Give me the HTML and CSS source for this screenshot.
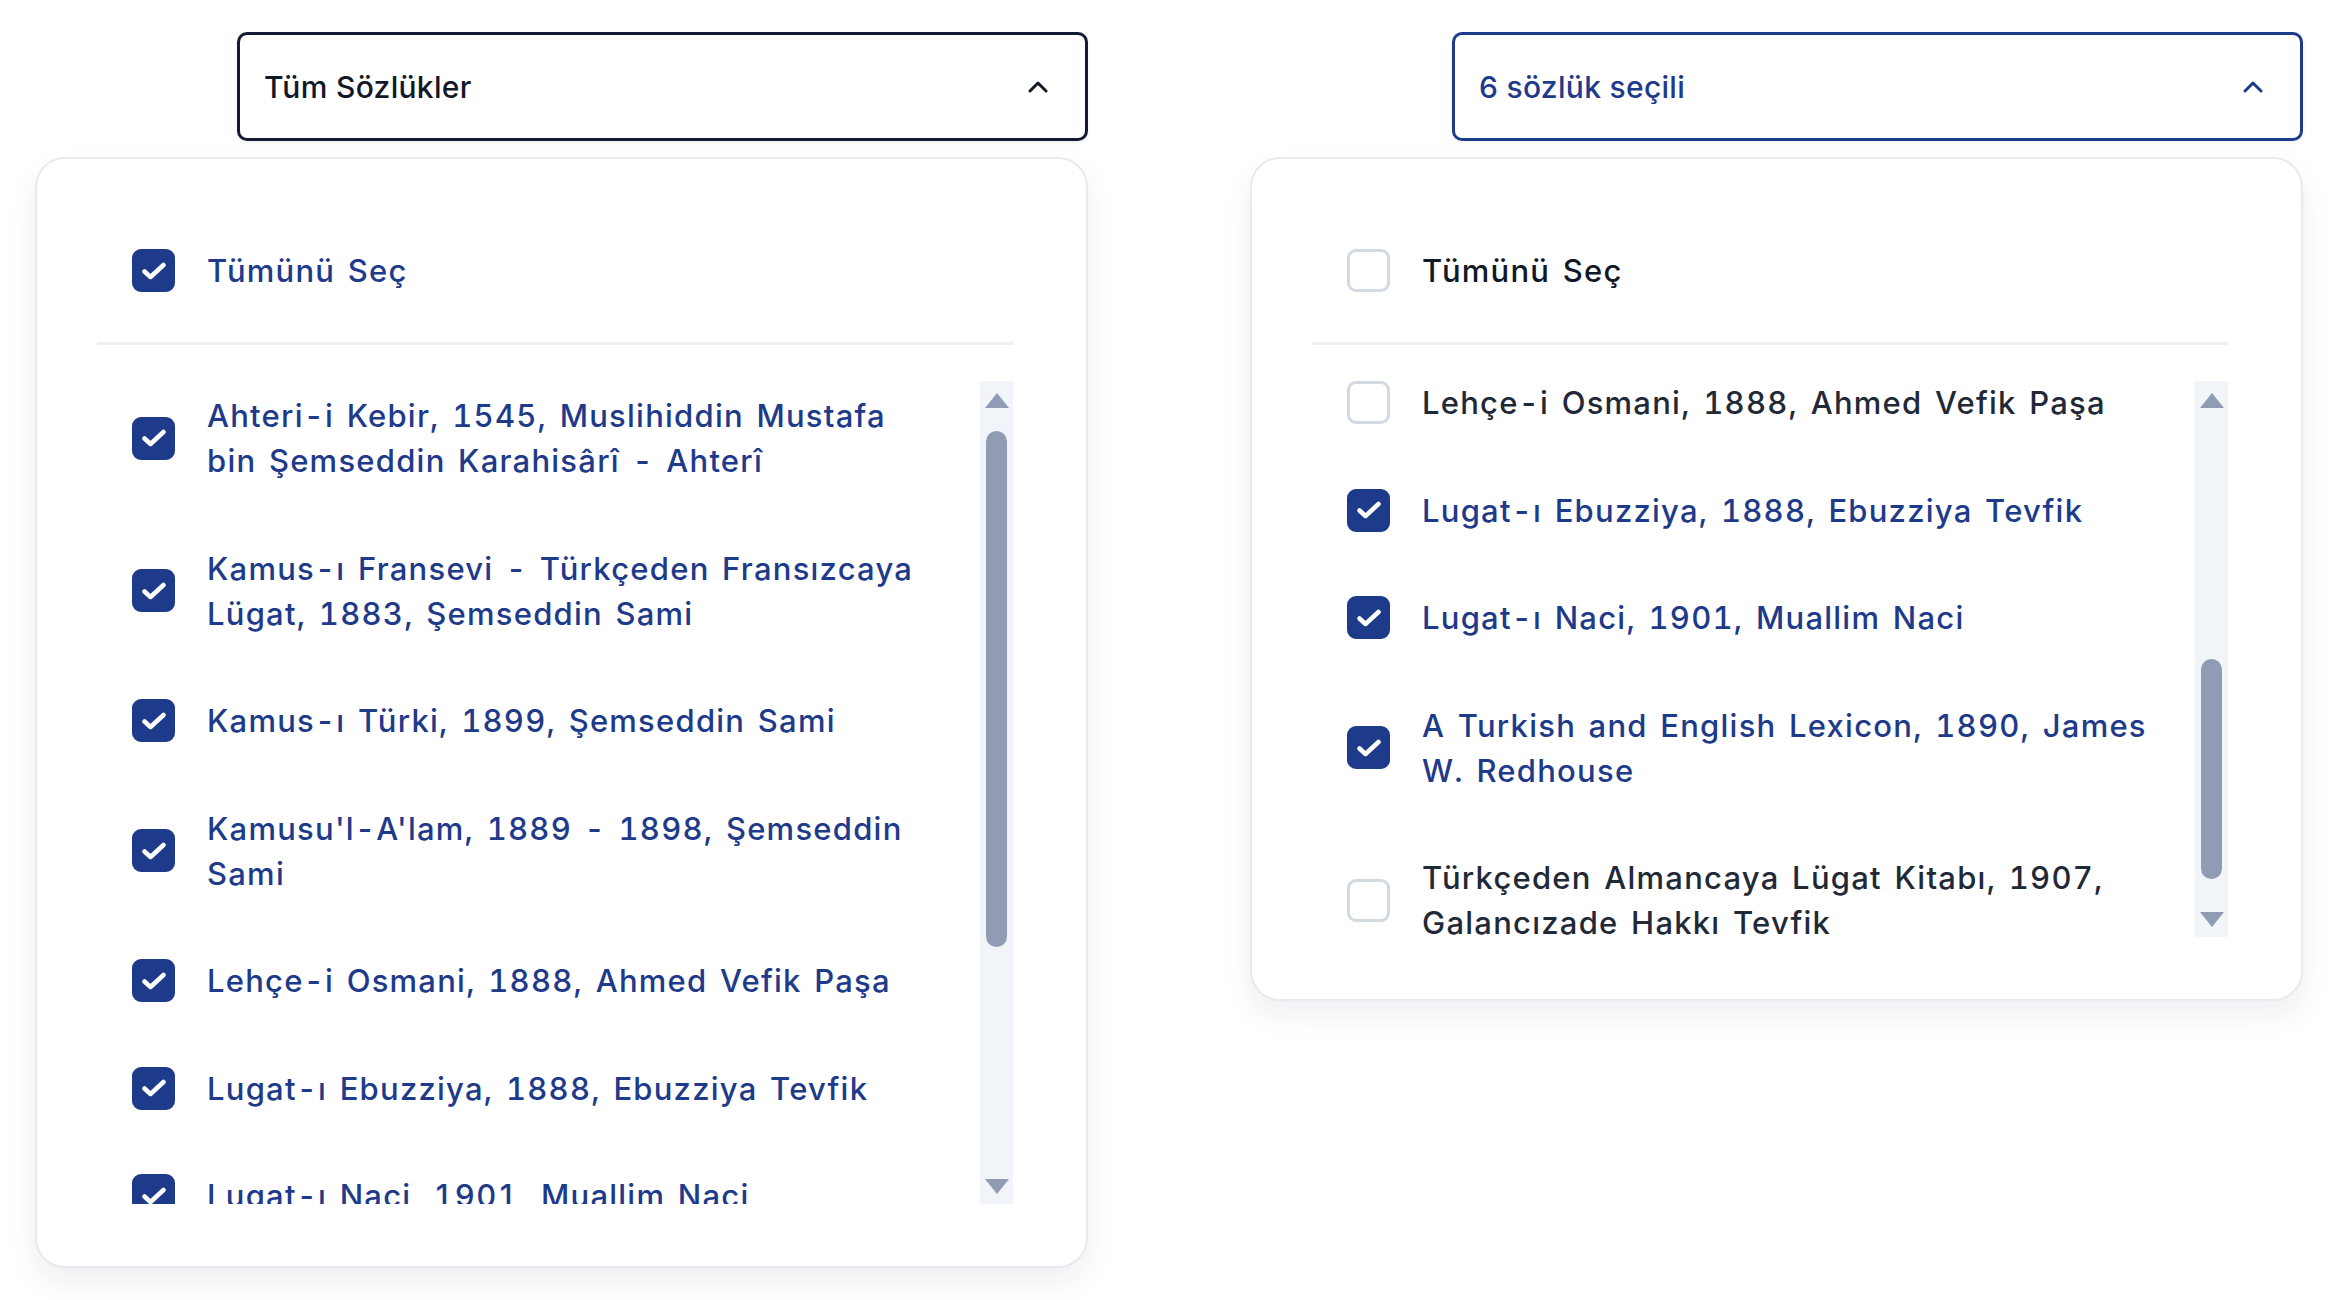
FILE: index.html
```html
<html lang="tr">
<head>
    <meta charset="UTF-8">
    <meta name="viewport" content="width=device-width, initial-scale=1.0">
    <title>Sözlük Seçimi</title>
    <link rel="stylesheet" href="styles.css">
</head>
<body>
    <div class="page">
        <div class="picker">
            <button class="trigger">
                <span>Tüm Sözlükler</span>
                <svg class="chevron" width="20" height="12" viewBox="0 0 20 12"><path d="M2 10l8-8 8 8" fill="none" stroke="currentColor" stroke-width="3" stroke-linecap="round" stroke-linejoin="round"/></svg>
            </button>
            <div class="panel">
                <div class="select-all checked">
                    <span class="box"><svg width="26" height="18" viewBox="0 0 26 18"><path d="M3.5 9.5l6 5.5L22.5 3" fill="none" stroke="#fff" stroke-width="4.5" stroke-linecap="round" stroke-linejoin="round"/></svg></span>
                    <span class="label-text">Tümünü Seç</span>
                </div>
                <div class="list-wrap">
                    <ul id="allList" class="dict-list"></ul>
                    <div class="scrollbar">
                        <span class="arrow arrow-up"></span>
                        <div class="scroll-track"><div class="scroll-thumb"></div></div>
                        <span class="arrow arrow-down"></span>
                    </div>
                </div>
            </div>
        </div>

        <div class="picker">
            <button class="trigger trigger-selected">
                <span>6 sözlük seçili</span>
                <svg class="chevron" width="20" height="12" viewBox="0 0 20 12"><path d="M2 10l8-8 8 8" fill="none" stroke="currentColor" stroke-width="3" stroke-linecap="round" stroke-linejoin="round"/></svg>
            </button>
            <div class="panel">
                <div class="select-all">
                    <span class="box"></span>
                    <span class="label-text">Tümünü Seç</span>
                </div>
                <div class="list-wrap list-wrap-short">
                    <ul id="someList" class="dict-list"></ul>
                    <div class="scrollbar">
                        <span class="arrow arrow-up"></span>
                        <div class="scroll-track"><div class="scroll-thumb"></div></div>
                        <span class="arrow arrow-down"></span>
                    </div>
                </div>
            </div>
        </div>
    </div>

    <script>
        // sözlük listesi
        var dictionaries = [
            'Ahteri-i Kebir, 1545, Muslihiddin Mustafa bin Şemseddin Karahisârî - Ahterî',
            'Kamus-ı Fransevi - Türkçeden Fransızcaya Lügat, 1883, Şemseddin Sami',
            'Kamus-ı Türki, 1899, Şemseddin Sami',
            "Kamusu'l-A'lam, 1889 - 1898, Şemseddin Sami",
            'Lehçe-i Osmani, 1888, Ahmed Vefik Paşa',
            'Lugat-ı Ebuzziya, 1888, Ebuzziya Tevfik',
            'Lugat-ı Naci, 1901, Muallim Naci',
            'A Turkish and English Lexicon, 1890, James W. Redhouse',
            'Türkçeden Almancaya Lügat Kitabı, 1907, Galancızade Hakkı Tevfik'
        ];

        var checkIcon = '<svg width="26" height="18" viewBox="0 0 26 18"><path d="M3.5 9.5l6 5.5L22.5 3" fill="none" stroke="#fff" stroke-width="4.5" stroke-linecap="round" stroke-linejoin="round"/></svg>';

        function renderList(listId, selected) {
            var list = document.getElementById(listId);
            list.innerHTML = '';
            dictionaries.forEach(function(name, index) {
                var isChecked = selected.indexOf(index) !== -1;
                var item = document.createElement('li');
                item.className = 'dict-item' + (isChecked ? ' checked' : '');
                item.innerHTML = `<span class="box">${isChecked ? checkIcon : ''}</span><span class="label-text">${name}</span>`;
                list.appendChild(item);
            });
        }

        // kaydırma çubuğunu listenin konumuna göre çiz
        function updateScrollbar(list) {
            var track = list.parentNode.querySelector('.scroll-track');
            var thumb = track.querySelector('.scroll-thumb');
            var trackLength = track.clientHeight - 10;
            var thumbLength = Math.max(40, trackLength * list.clientHeight / list.scrollHeight);
            var maxScroll = list.scrollHeight - list.clientHeight;
            var offset = maxScroll > 0 ? (trackLength - thumbLength) * list.scrollTop / maxScroll : 0;
            thumb.style.height = thumbLength + 'px';
            thumb.style.marginTop = offset + 'px';
        }

        renderList('allList', [0, 1, 2, 3, 4, 5, 6, 7, 8]);
        renderList('someList', [0, 1, 2, 5, 6, 7]);

        var allList = document.getElementById('allList');
        var someList = document.getElementById('someList');
        // ikinci liste "Lehçe-i Osmani" satırına kaydırılmış halde
        someList.scrollTop = someList.children[4].offsetTop - someList.children[0].offsetTop + 13;

        updateScrollbar(allList);
        updateScrollbar(someList);
        allList.addEventListener('scroll', function() { updateScrollbar(allList); });
        someList.addEventListener('scroll', function() { updateScrollbar(someList); });
    </script>
</body>
</html>
```

FILE: styles.css
```css
body {
    margin: 0;
    background-color: #fff;
    color: #111827;
    font-family: Inter, "Noto Sans", sans-serif;
}
.page {
    display: flex;
    align-items: flex-start;
    gap: 162px;
    padding: 32px 0 0 35px;
}
.picker {
    width: 1053px;
    display: flex;
    flex-direction: column;
    align-items: flex-end;
}
.trigger {
    box-sizing: border-box;
    width: 851px;
    height: 109px;
    display: flex;
    align-items: center;
    justify-content: space-between;
    padding: 0 37px 0 24px;
    border: 3px solid #141b34;
    border-radius: 10px;
    background-color: #fff;
    box-shadow: 0 2px 4px rgba(15, 23, 42, 0.06);
    color: #111827;
    font-family: Inter, "Noto Sans", sans-serif;
    font-size: 30px;
    font-weight: 500;
    letter-spacing: 0.01em;
    cursor: pointer;
}
.trigger-selected {
    border-color: #1e3a8a;
    color: #1e3a8a;
}
.panel {
    box-sizing: border-box;
    width: 100%;
    margin-top: 16px;
    padding: 60px 73px 62px 60px;
    border: 2px solid #e7eaf0;
    border-radius: 30px;
    background-color: #fff;
    box-shadow: 0 14px 30px rgba(15, 23, 42, 0.07);
}
.select-all {
    display: flex;
    align-items: center;
    gap: 32px;
    padding: 29px 0 49px 35px;
    border-bottom: 3px solid #eceff4;
    color: #111827;
}
.select-all.checked {
    color: #1e3a8a;
}
.label-text {
    font-size: 31px;
    line-height: 45px;
    font-weight: 500;
    letter-spacing: 0.04em;
    word-spacing: 3px;
    font-variant-numeric: tabular-nums;
}
.box {
    box-sizing: border-box;
    flex: none;
    width: 43px;
    height: 43px;
    display: flex;
    align-items: center;
    justify-content: center;
    border: 3px solid #d3d9e3;
    border-radius: 9px;
    background-color: #fff;
}
.checked .box {
    border-color: #1e3a8a;
    background-color: #1e3a8a;
}
.list-wrap {
    display: flex;
    height: 823px;
    margin-top: 36px;
}
.list-wrap-short {
    height: 556px;
}
.dict-list {
    flex: 1;
    margin: 0;
    padding: 0;
    list-style: none;
    display: flex;
    flex-direction: column;
    gap: 38.5px;
    overflow: hidden;
}
.dict-item {
    flex-shrink: 0;
    display: flex;
    align-items: center;
    gap: 32px;
    padding: 12px 40px 12px 35px;
    color: #1f2937;
}
.dict-item.checked {
    color: #1e3a8a;
}
.scrollbar {
    flex: none;
    width: 33px;
    display: flex;
    flex-direction: column;
    background-color: #f1f4f8;
}
.arrow {
    flex: none;
    height: 45px;
    display: flex;
    justify-content: center;
}
.arrow::before {
    content: "";
    width: 0;
    height: 0;
    border-left: 12px solid transparent;
    border-right: 12px solid transparent;
}
.arrow-up {
    align-items: flex-start;
}
.arrow-up::before {
    margin-top: 12px;
    border-bottom: 15px solid #8f9cb3;
}
.arrow-down {
    align-items: flex-end;
}
.arrow-down::before {
    margin-bottom: 10px;
    border-top: 15px solid #8f9cb3;
}
.scroll-track {
    flex: 1;
    padding: 5px 6px;
    overflow: hidden;
}
.scroll-thumb {
    border-radius: 11px;
    background-color: #8f9cb3;
}
```
